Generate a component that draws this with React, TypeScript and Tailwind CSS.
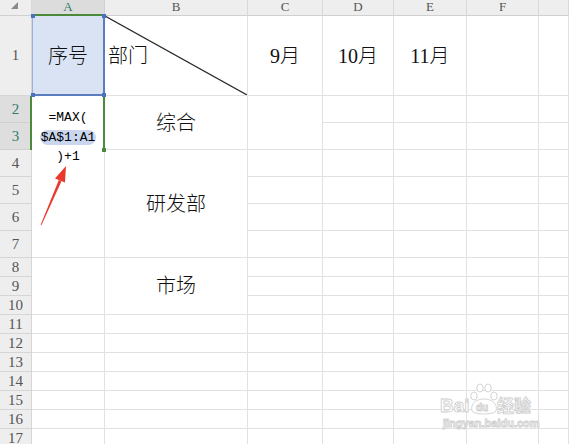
import React from "react";

const CELL = "border-r border-b border-[#e1e1e1]";
const RH =
  "flex items-center justify-center border-r border-b border-[#d6d6d6] bg-[#eeeeee] text-[15px] leading-none text-[#555] font-['Liberation_Serif',serif]";
const RH_SEL =
  "flex items-center justify-center border-r border-b border-[#cfcfcf] bg-[#dedede] text-[15px] leading-none text-[#2e7d6b] font-['Liberation_Serif',serif]";
const CH =
  "flex justify-center items-start border-r border-b border-r-[#d9d9d9] border-b-[#d0d0d0] bg-[#eeeeee] text-[13px] leading-[14px] text-[#555] font-['Liberation_Serif',serif]";
const CH_SEL =
  "flex justify-center items-start border-r border-b-2 border-r-[#d0d0d0] border-b-[#4b8a3a] bg-[#dcdcdc] text-[13px] leading-[14px] text-[#2e7d6b] font-['Liberation_Serif',serif]";
const TXT =
  "font-['Liberation_Serif','Noto_Sans_CJK_SC',sans-serif] text-[20px] leading-none font-light text-[#111]";

function Rh({ n, sel }: { n: number; sel?: boolean }) {
  return <div className={sel ? RH_SEL : RH}>{n}</div>;
}

function Plain({ count }: { count: number }) {
  return (
    <>
      {Array.from({ length: count }).map((_, i) => (
        <div key={i} className={CELL} />
      ))}
    </>
  );
}

function Watermark() {
  return (
    <svg
      className="absolute left-[430px] top-[375px]"
      width="110"
      height="60"
      viewBox="0 0 110 60"
    >
      <g fill="#ffffff" stroke="#cfcfcf" strokeWidth="0.9">
        <text x="10" y="37" fontFamily="Liberation Sans, Arial, sans-serif" fontWeight="700" fontSize="19">
          Bai
        </text>
        <ellipse cx="44" cy="21" rx="3.2" ry="4" />
        <ellipse cx="50" cy="13" rx="3.2" ry="4" />
        <ellipse cx="58" cy="13" rx="3.2" ry="4" />
        <ellipse cx="64" cy="21" rx="3.2" ry="4" />
        <path d="M42 36 C40 28 47 24 54 24 C61 24 68 28 66 36 C64 40 44 40 42 36 Z" />
        <text x="46" y="36" fontFamily="Liberation Sans, Arial, sans-serif" fontWeight="700" fontSize="10">
          du
        </text>
        <text x="67" y="37" fontFamily="'Noto Sans CJK SC', sans-serif" fontWeight="700" fontSize="17">
          经验
        </text>
        <text x="13" y="52" fontFamily="Liberation Sans, Arial, sans-serif" fontWeight="700" fontSize="11">
          jingyan.baidu.com
        </text>
      </g>
    </svg>
  );
}

export default function App() {
  return (
    <div className="relative w-[569px] h-[444px] overflow-hidden bg-white">
      <div className="grid grid-cols-[32px_73px_143px_75px_71px_73px_72px_1fr] grid-rows-[16px_80px_repeat(6,27px)_repeat(10,19px)]">
        {/* header row */}
        <div className="flex items-start justify-start pl-[11px] pt-[2px] border-r border-b border-r-[#d9d9d9] border-b-[#d0d0d0] bg-[#eeeeee]">
          <svg width="8" height="8" viewBox="0 0 8 8">
            <polygon points="7,0 7,7 0,7" fill="#8a8a8a" />
          </svg>
        </div>
        <div className={CH_SEL}>A</div>
        <div className={CH}>B</div>
        <div className={CH}>C</div>
        <div className={CH}>D</div>
        <div className={CH}>E</div>
        <div className={CH}>F</div>
        <div className={CH} />

        {/* row 1 */}
        <Rh n={1} />
        <div className={`${CELL} bg-[#dae3f3] flex items-center justify-center`}>
          <span className={TXT}>序号</span>
        </div>
        <div className={`${CELL} relative flex items-center pl-[3px]`}>
          <svg className="absolute inset-0 w-full h-full" preserveAspectRatio="none">
            <line x1="0" y1="0" x2="100%" y2="100%" stroke="#2a2a2a" strokeWidth="1.2" />
          </svg>
          <span className={TXT}>部门</span>
        </div>
        <div className={`${CELL} flex items-center justify-center`}>
          <span className={TXT}>9月</span>
        </div>
        <div className={`${CELL} flex items-center justify-center`}>
          <span className={TXT}>10月</span>
        </div>
        <div className={`${CELL} flex items-center justify-center`}>
          <span className={TXT}>11月</span>
        </div>
        <div className={CELL} />
        <div className={CELL} />

        {/* row 2 */}
        <Rh n={2} sel />
        <div className="row-span-2 border-r border-[#e1e1e1] relative z-10 pt-[12px] text-center font-['Liberation_Mono',monospace] text-[13px] leading-[19.5px] text-black whitespace-nowrap">
          <div>=MAX(</div>
          <div>
            <span className="bg-[#c9d6ee] rounded-full px-px">$A$1:A1</span>
          </div>
          <div>)+1</div>
        </div>
        <div className={`${CELL} row-span-2 flex items-center justify-center`}>
          <span className={TXT}>综合</span>
        </div>
        <div className={`${CELL} row-span-2`} />
        <Plain count={4} />

        {/* row 3 */}
        <Rh n={3} sel />
        <Plain count={4} />

        {/* row 4 */}
        <Rh n={4} />
        <div className={`${CELL} row-span-4`} />
        <div className={`${CELL} row-span-4 flex items-center justify-center`}>
          <span className={TXT}>研发部</span>
        </div>
        <Plain count={5} />

        <Rh n={5} />
        <Plain count={5} />
        <Rh n={6} />
        <Plain count={5} />
        <Rh n={7} />
        <Plain count={5} />

        {/* row 8 */}
        <Rh n={8} />
        <div className={`${CELL} row-span-3`} />
        <div className={`${CELL} row-span-3 flex items-center justify-center`}>
          <span className={TXT}>市场</span>
        </div>
        <Plain count={5} />
        <Rh n={9} />
        <Plain count={5} />
        <Rh n={10} />
        <Plain count={5} />

        <Rh n={11} />
        <Plain count={7} />
        <Rh n={12} />
        <Plain count={7} />
        <Rh n={13} />
        <Plain count={7} />
        <Rh n={14} />
        <Plain count={7} />
        <Rh n={15} />
        <Plain count={7} />
        <Rh n={16} />
        <Plain count={7} />
        <Rh n={17} />
        <Plain count={7} />
      </div>

      {/* selection overlays */}
      <div className="absolute left-[32px] top-[16px] w-[73px] h-[80px] border-l border-r-2 border-b-2 border-l-[#9db1d8] border-r-[#5b7cbd] border-b-[#5b7cbd] z-20" />
      <div className="absolute left-[30px] top-[96px] w-[75px] h-[54px] border-x-2 border-[#4b8a3a] z-20" />
      <div className="absolute left-[31px] top-[14px] w-[4px] h-[4px] bg-[#4a72c0] z-30" />
      <div className="absolute left-[102px] top-[14px] w-[4px] h-[4px] bg-[#4a72c0] z-30" />
      <div className="absolute left-[31px] top-[93px] w-[4px] h-[4px] bg-[#4a72c0] z-30" />
      <div className="absolute left-[102px] top-[93px] w-[4px] h-[4px] bg-[#4a72c0] z-30" />
      <div className="absolute left-[102px] top-[148px] w-[4px] h-[4px] bg-[#4b8a3a] z-30" />

      {/* red arrow annotation */}
      <svg className="absolute inset-0 pointer-events-none z-40" width="569" height="444" viewBox="0 0 569 444">
        <polygon points="40.6,225 41.4,225.3 61.5,181.2 58.8,180.1" fill="#e8392c" />
        <polygon points="66,166 55,178.5 65,182.5" fill="#e8392c" />
      </svg>

      <Watermark />
    </div>
  );
}
